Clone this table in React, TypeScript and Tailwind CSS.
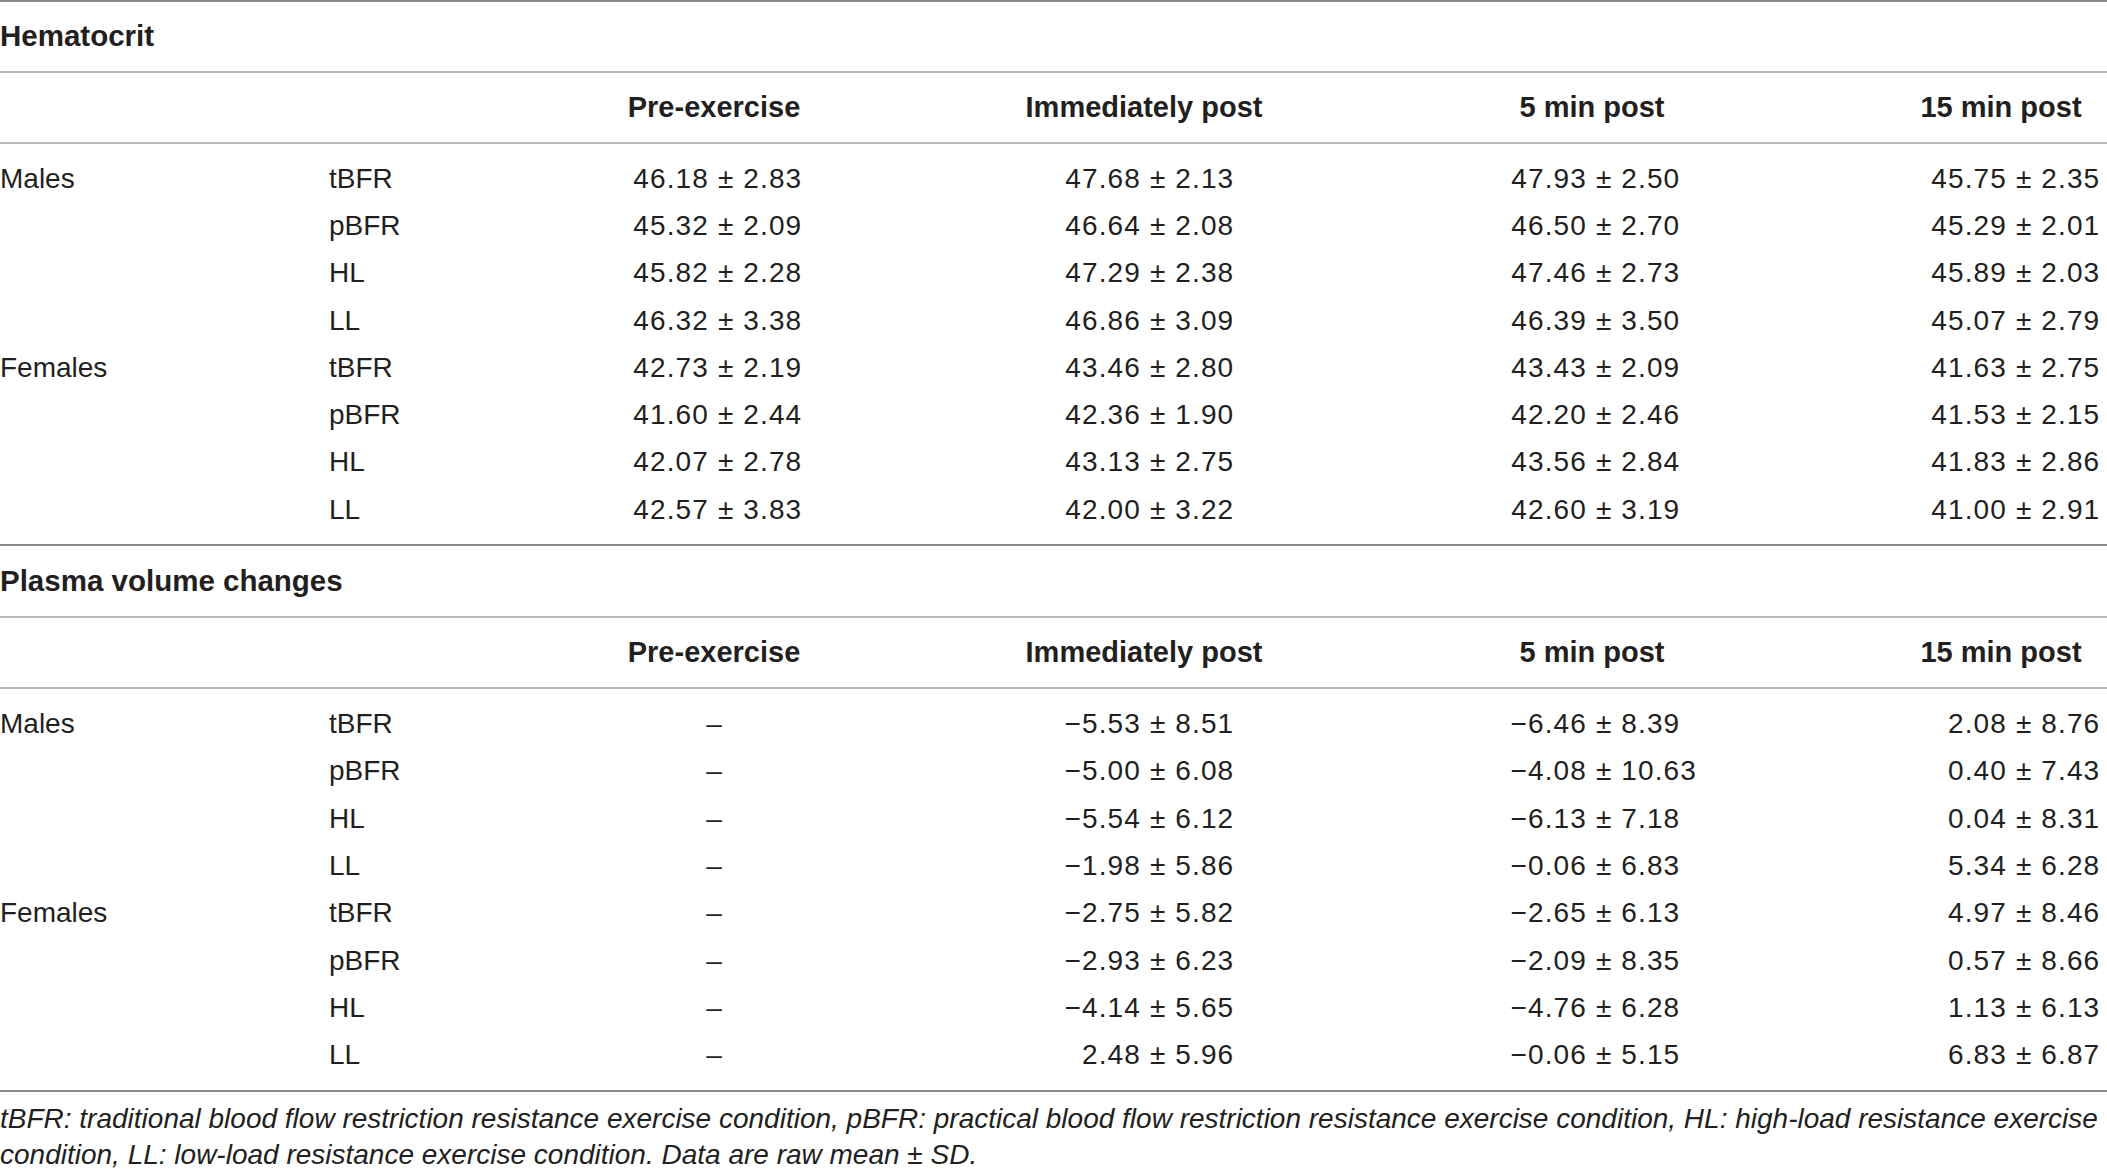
type Row = { group?: string; cond: string; vals: (string | null)[] };

const hematocrit: Row[] = [
  { group: "Males", cond: "tBFR", vals: ["46.18 ± 2.83", "47.68 ± 2.13", "47.93 ± 2.50", "45.75 ± 2.35"] },
  { cond: "pBFR", vals: ["45.32 ± 2.09", "46.64 ± 2.08", "46.50 ± 2.70", "45.29 ± 2.01"] },
  { cond: "HL", vals: ["45.82 ± 2.28", "47.29 ± 2.38", "47.46 ± 2.73", "45.89 ± 2.03"] },
  { cond: "LL", vals: ["46.32 ± 3.38", "46.86 ± 3.09", "46.39 ± 3.50", "45.07 ± 2.79"] },
  { group: "Females", cond: "tBFR", vals: ["42.73 ± 2.19", "43.46 ± 2.80", "43.43 ± 2.09", "41.63 ± 2.75"] },
  { cond: "pBFR", vals: ["41.60 ± 2.44", "42.36 ± 1.90", "42.20 ± 2.46", "41.53 ± 2.15"] },
  { cond: "HL", vals: ["42.07 ± 2.78", "43.13 ± 2.75", "43.56 ± 2.84", "41.83 ± 2.86"] },
  { cond: "LL", vals: ["42.57 ± 3.83", "42.00 ± 3.22", "42.60 ± 3.19", "41.00 ± 2.91"] },
];

const plasma: Row[] = [
  { group: "Males", cond: "tBFR", vals: [null, "−5.53 ± 8.51", "−6.46 ± 8.39", "2.08 ± 8.76"] },
  { cond: "pBFR", vals: [null, "−5.00 ± 6.08", "−4.08 ± 10.63", "0.40 ± 7.43"] },
  { cond: "HL", vals: [null, "−5.54 ± 6.12", "−6.13 ± 7.18", "0.04 ± 8.31"] },
  { cond: "LL", vals: [null, "−1.98 ± 5.86", "−0.06 ± 6.83", "5.34 ± 6.28"] },
  { group: "Females", cond: "tBFR", vals: [null, "−2.75 ± 5.82", "−2.65 ± 6.13", "4.97 ± 8.46"] },
  { cond: "pBFR", vals: [null, "−2.93 ± 6.23", "−2.09 ± 8.35", "0.57 ± 8.66"] },
  { cond: "HL", vals: [null, "−4.14 ± 5.65", "−4.76 ± 6.28", "1.13 ± 6.13"] },
  { cond: "LL", vals: [null, "2.48 ± 5.96", "−0.06 ± 5.15", "6.83 ± 6.87"] },
];

const grid = "grid grid-cols-[329px_271px_228px_632px_264px_383px]";
const offsets = ["ml-[29px]", "ml-[233px]", "ml-[47px]", "ml-[203px]"];

function Value({ v, col }: { v: string | null; col: number }) {
  if (v === null) return <div className="text-center">–</div>;
  const [left, right] = v.split(" ± ");
  return (
    <div className={`flex tracking-[0.04em] ${offsets[col]}`}>
      <span className="w-[80px] text-right">{left}</span>
      <span className="whitespace-pre"> ± {right}</span>
    </div>
  );
}

function Header() {
  return (
    <div className={`${grid} h-[71px] items-center border-b-2 border-[#b8b8b8] text-[29px] font-bold`}>
      <div />
      <div />
      <div className="text-center">Pre-exercise</div>
      <div className="text-center">Immediately post</div>
      <div className="text-center">5 min post</div>
      <div className="pl-[171px] text-center">15 min post</div>
    </div>
  );
}

function Section({ title, rows, first }: { title: string; rows: Row[]; first?: boolean }) {
  return (
    <div>
      {first ? (
        <div className="flex h-[73px] items-center border-y-2 border-t-[#8c8c8c] border-b-[#b8b8b8] text-[29.5px] font-bold">
          {title}
        </div>
      ) : (
        <div className="flex h-[72px] items-center border-b-2 border-[#b8b8b8] text-[29.5px] font-bold">{title}</div>
      )}
      <Header />
      <div className="border-b-2 border-[#8c8c8c] py-[11px]">
        {rows.map((r, i) => (
          <div key={i} className={`${grid} h-[47.3px] items-center`}>
            <div>{r.group ?? ""}</div>
            <div>{r.cond}</div>
            {r.vals.map((v, j) => (
              <Value key={j} v={v} col={j} />
            ))}
          </div>
        ))}
      </div>
    </div>
  );
}

export default function App() {
  return (
    <div className="min-h-screen w-full bg-white font-['Liberation_Sans',Arial,sans-serif] text-[28px] text-[#231f20]">
      <Section title="Hematocrit" rows={hematocrit} first />
      <Section title="Plasma volume changes" rows={plasma} />
      <p className="pt-[9px] text-[28px] italic leading-[36px]">
        tBFR: traditional blood flow restriction resistance exercise condition, pBFR: practical blood flow restriction
        resistance exercise condition, HL: high-load resistance exercise
        <br />
        condition, LL: low-load resistance exercise condition. Data are raw mean ± SD.
      </p>
    </div>
  );
}
